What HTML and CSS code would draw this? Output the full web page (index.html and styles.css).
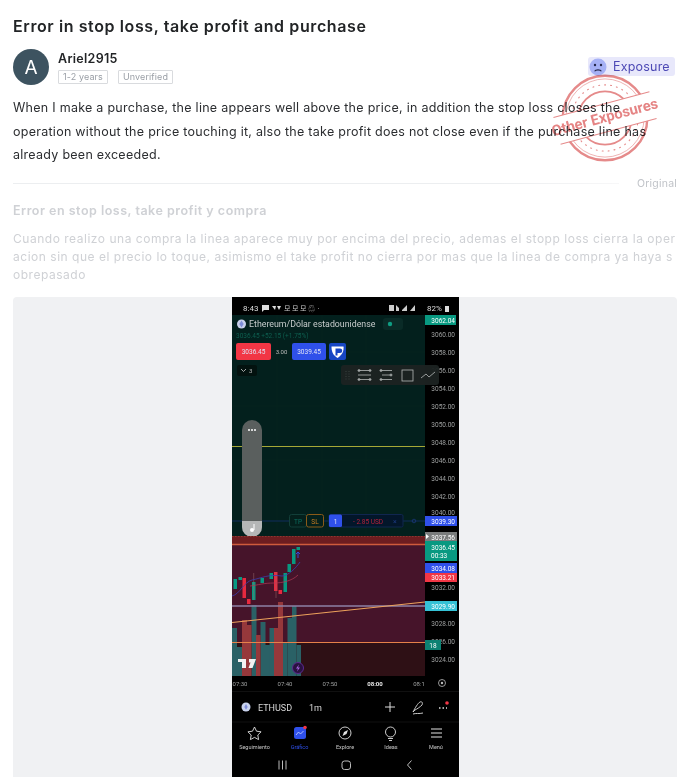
FILE: index.html
```html
<!DOCTYPE html>
<html lang="en">
<head>
<meta charset="utf-8">
<title>Error in stop loss, take profit and purchase</title>
<link rel="stylesheet" href="styles.css">
</head>
<body>
<main class="post">
  <h1 class="title">Error in stop loss, take profit and purchase</h1>
  <div class="author">
    <div class="avatar">A</div>
    <div class="author-info">
      <div class="name">Ariel2915</div>
      <div class="tags"><span class="tag tag-wide">1-2 years</span><span class="tag">Unverified</span></div>
    </div>
    <div class="badge">
      <svg class="badge-face" viewBox="0 0 18 18"><circle cx="9" cy="9" r="8.5" fill="#a6b1f6"/><circle cx="6" cy="7" r="1.2" fill="#24264a"/><circle cx="12" cy="7" r="1.2" fill="#24264a"/><path d="M5.6 13.2c1-1.8 5.8-1.8 6.8 0" fill="none" stroke="#24264a" stroke-width="1.1"/></svg>
      <span>Exposure</span>
    </div>
  </div>
  <div class="body-wrap">
    <p class="body">When I make a purchase, the line appears well above the price, in addition the stop loss closes the operation without the price touching it, also the take profit does not close even if the purchase line has already been exceeded.</p>
    <svg class="stamp" viewBox="0 0 100 100">
      <g fill="none" stroke="#e58a8a">
        <circle cx="50" cy="50" r="46" stroke-width="2.6"/>
        <circle cx="50" cy="50" r="42.5" stroke-width=".7"/>
        <circle cx="50" cy="50" r="36" stroke-width="1.2" stroke-dasharray="1 5.5" stroke-linecap="round"/>
        <circle cx="50" cy="50" r="29" stroke-width="2"/>
      </g>
      <g transform="rotate(-15 50 50)">
        <rect x="-4" y="35" width="108" height="30" fill="#fff"/>
        <path d="M-4 35H104M-4 65H104" stroke="#e58a8a" stroke-width="1"/>
        <text class="stamp-text" x="50" y="54.500" text-anchor="middle">Other Exposures</text>
      </g>
    </svg>
  </div>
  <div class="rule-row"><div class="rule"></div><span class="original">Original</span></div>
  <h2 class="title-es">Error en stop loss, take profit y compra</h2>
  <p class="body-es">Cuando realizo una compra la linea aparece muy por encima del precio, ademas el stopp loss cierra la operacion sin que el precio lo toque, asimismo el take profit no cierra por mas que la linea de compra ya haya sobrepasado</p>
  <div class="shot">
    <svg class="phone" viewBox="232 297 227 480">
      <rect x="232" y="297" width="227" height="480" fill="#000"/>
      <rect x="232" y="315" width="193" height="221" fill="#03201d"/>
      <path d="M232 352H425M232 406H425M232 460H425M277 315V536M322 315V536M366 315V536" stroke="#07271f" stroke-width=".6"/>

      <text class="st" x="243" y="311">8:43</text>
      <path d="M262 305h7v5h-5l-2 2zM272 306h4l-1 4zM277 306h4l-2 4z" fill="#ddd"/>
      <text class="st-i" x="284" y="311">모 모 모 ♲ ·</text>
      <path d="M389 305h5v6h-5zM396 305l3 3v3h-3zM402 310l5-5v6h-5zM410 311l5-6v6h-5z" fill="#ccc"/>
      <text class="st" x="427" y="311">82%</text>
      <rect x="445" y="306" width="4" height="6" fill="#ddd"/>

      <circle cx="241.500" cy="324" r="4.500" fill="#c9d0ec"/>
      <path d="M241.500 320.500l-2.200 3.600 2.200 3.400 2.200-3.400z" fill="#7f8dd8"/>
      <text class="chart-title" x="249" y="327">Ethereum/Dólar estadounidense</text>
      <rect x="383" y="318" width="20" height="12" rx="3" fill="#0a2b27"/>
      <circle cx="390" cy="324" r="2.200" fill="#0f9d83"/>
      <text class="quote" x="236" y="338">3036.45 +52.15 (+1.75%)</text>

      <rect x="236" y="343" width="35" height="17" rx="2" fill="#f23645"/>
      <text class="btn" x="253.500" y="354" text-anchor="middle">3036.45</text>
      <text class="qty" x="281.500" y="353.500" text-anchor="middle">3.00</text>
      <rect x="292" y="343" width="34" height="17" rx="2" fill="#2f50ea"/>
      <text class="btn" x="309" y="354" text-anchor="middle">3039.45</text>
      <rect x="329" y="343" width="17" height="17" rx="2" fill="#1746c4"/>
      <path d="M331.500 346.500h12c.5 4-.8 8-6 11.500-5-3-6-7-6-11.500z" fill="#fff"/>
      <path d="M335.500 348.500h4.500a2 2 0 0 1 0 4.500h-2.500v2.500h-2z" fill="#1746c4"/>

      <rect x="237" y="365" width="20" height="11" rx="2" fill="#03120f"/>
      <path d="M241 369l2.500 2.500 2.500-2.500" fill="none" stroke="#ccc" stroke-width=".8"/>
      <text class="qty" x="249" y="373">3</text>

      <text class="axis-under" x="455" y="372.500" text-anchor="end">3056.00</text>
      <rect x="341" y="365" width="98" height="20" rx="3" fill="#1c2221" fill-opacity=".96"/>
      <path d="M346 371v10M349 371v10" stroke="#3b4241" stroke-dasharray="1 1.500"/>
      <g fill="none" stroke="#b4b8b8" stroke-width=".8">
        <path d="M358 370.500H371M358 375H371M358 379.500H371"/><circle cx="359" cy="370.500" r="1"/><circle cx="370" cy="370.500" r="1"/><circle cx="359" cy="379.500" r="1"/><circle cx="370" cy="379.500" r="1"/>
        <path d="M380 370.500H392M382 375H392M380 379.500H392"/><circle cx="381" cy="370.500" r="1"/><circle cx="391" cy="375" r="1"/><circle cx="381" cy="379.500" r="1"/>
        <rect x="402" y="370" width="11" height="11"/>
        <path d="M421 378l5-4 3 3 6-5"/>
      </g>

      <path d="M232 446.500H425" stroke="#a6a836" stroke-width="1.200"/>
      <path d="M232 521H425" stroke="#15306d" stroke-width=".8"/>
      <rect x="242" y="420" width="20" height="117" rx="10" fill="#5a5f5e"/>
      <path d="M242 521h20v6a10 10 0 0 1-20 0z" fill="#b5b7b7"/>
      <path d="M248 430h2M251 430h2M254 430h2" stroke="#fff" stroke-width="1.500"/>
      <path d="M254 524v6" stroke="#fff"/>
      <circle cx="252" cy="530" r="2" fill="#fff"/>

      <rect x="289.500" y="514.500" width="17" height="12.500" rx="2" fill="#04201c" stroke="#123f39"/>
      <text class="pos-tp" x="298" y="523.500" text-anchor="middle">TP</text>
      <rect x="306.500" y="514.500" width="17" height="12.500" rx="2" fill="#04201c" stroke="#8a5a18"/>
      <text class="pos-sl" x="315" y="523.500" text-anchor="middle">SL</text>
      <rect x="329" y="514.500" width="74" height="12.500" rx="1.500" fill="#03162a" stroke="#10264f"/>
      <rect x="329" y="514.500" width="13" height="12.500" rx="1.500" fill="#2f50ea"/>
      <text class="btn" x="335.500" y="523.500" text-anchor="middle">1</text>
      <text class="pos-usd" x="353" y="523.500">- 2.85 USD</text>
      <text class="pos-x" x="393" y="523.500">×</text>
      <circle cx="414" cy="521" r="1.800" fill="none" stroke="#1c3a84" stroke-width=".7"/>

      <rect x="232" y="536" width="193" height="9" fill="#6d1d20"/>
      <rect x="232" y="545" width="193" height="97" fill="#46142a"/>
      <rect x="232" y="642" width="193" height="34" fill="#2e1015"/>
      <path d="M232 536.500H425" stroke="#a24a3c" stroke-width=".6" stroke-dasharray="1.500 1.500"/>
      <path d="M232 544.500H425" stroke="#cf5b3c" stroke-width="1.300"/>

      <g fill="#2a6166">
        <rect x="232" y="628" width="5" height="48"/><rect x="237" y="647" width="5" height="29"/>
        <rect x="251.500" y="605" width="5" height="71"/><rect x="260.500" y="622" width="5" height="54"/>
        <rect x="265" y="645" width="5" height="31"/><rect x="269.500" y="628" width="4.500" height="48"/>
        <rect x="283" y="643" width="4.500" height="33"/><rect x="287.500" y="618" width="4.500" height="58"/>
        <rect x="292" y="606" width="4.500" height="70"/><rect x="296.500" y="645" width="4.500" height="31"/>
      </g>
      <g fill="#96383b">
        <rect x="242" y="620" width="5" height="56"/><rect x="247" y="625" width="4.500" height="51"/>
        <rect x="256" y="635" width="4.500" height="41"/><rect x="274" y="628" width="4.500" height="48"/>
        <rect x="278" y="602" width="5" height="74"/>
      </g>

      <g fill="#089981">
        <rect x="233.500" y="579" width="3.500" height="10"/><rect x="238.500" y="577" width="3.500" height="3"/>
        <rect x="252" y="582" width="3.500" height="18"/><rect x="260.500" y="578" width="3.500" height="5"/>
        <rect x="269.500" y="573" width="3.500" height="6"/><rect x="283.500" y="573" width="3.500" height="19"/>
        <rect x="287.500" y="564" width="3.500" height="8"/><rect x="292" y="549" width="3.500" height="15"/>
        <rect x="296.500" y="547" width="3.500" height="3"/>
      </g>
      <g fill="#e8293f">
        <rect x="242.500" y="578" width="3.500" height="20"/><rect x="247" y="599" width="3.500" height="5"/>
        <rect x="274" y="572" width="3.500" height="19"/><rect x="278.500" y="590" width="3.500" height="4"/>
      </g>
      <path d="M253.700 573V600M276 572V598" stroke="#9a6a6a" stroke-width=".5"/>
      <path d="M232 596c8-2 12-14 20-16 10-2 16-6 30-4 6 0 14-8 18-14" fill="none" stroke="#3a3fae" stroke-width=".8"/>
      <path d="M250 586c8-1 14-3 24-3 8 0 18-2 24-8" fill="none" stroke="#b13a56" stroke-width=".7"/>
      <path d="M298 558v-6m-2 2l2-2 2 2" fill="none" stroke="#2f50ea" stroke-width=".9"/>

      <path d="M232 606H425" stroke="#8e80a6" stroke-width="1.500"/>
      <path d="M232 622.500L425 602" stroke="#eda25c" stroke-width="1.200"/>
      <path d="M232 642.500H425" stroke="#e68149" stroke-width="1.100"/>

      <path d="M238 659h8v9h-4v-6h-4zM249 659h7l-3.500 9h-4l2-5.500h-1.500z" fill="#f2f2f2"/>
      <circle cx="298" cy="668" r="5.500" fill="#2a1140" stroke="#5b2a8f"/>
      <path d="M299 664.500l-3 4h2l-1 3 3-4h-2z" fill="#a563e0"/>

      <g class="axis">
        <text x="455" y="336.500" text-anchor="end">3060.00</text>
        <text x="455" y="354.500" text-anchor="end">3058.00</text>
        <text x="455" y="390.500" text-anchor="end">3054.00</text>
        <text x="455" y="408.500" text-anchor="end">3052.00</text>
        <text x="455" y="426.500" text-anchor="end">3050.00</text>
        <text x="455" y="444.500" text-anchor="end">3048.00</text>
        <text x="455" y="462.500" text-anchor="end">3046.00</text>
        <text x="455" y="480.500" text-anchor="end">3044.00</text>
        <text x="455" y="498.500" text-anchor="end">3042.00</text>
        <text x="455" y="514.500" text-anchor="end">3040.00</text>
        <text x="455" y="589.500" text-anchor="end">3032.00</text>
        <text x="455" y="625.500" text-anchor="end">3028.00</text>
        <text x="455" y="643.500" text-anchor="end">3026.00</text>
        <text x="455" y="661.500" text-anchor="end">3024.00</text>
      </g>
      <rect x="425" y="315" width="31" height="10" fill="#089981"/>
      <text class="tagv" x="455" y="322.500" text-anchor="end">3062.04</text>
      <rect x="425" y="516" width="32" height="10" fill="#2f50ea"/>
      <text class="tagv" x="455" y="523.500" text-anchor="end">3039.30</text>
      <rect x="425" y="532" width="32" height="9" fill="#7a7c7c"/>
      <path d="M426 534l3 2.500-3 2.500z" fill="#fff"/>
      <text class="tagv" x="455" y="539.500" text-anchor="end">3037.56</text>
      <rect x="425" y="541" width="32" height="20" fill="#089981"/>
      <text class="tagv" x="455" y="549.500" text-anchor="end">3036.45</text>
      <text class="tagv" x="431" y="558">00:33</text>
      <rect x="425" y="563" width="32" height="10" fill="#2f50ea"/>
      <text class="tagv" x="455" y="570.500" text-anchor="end">3034.08</text>
      <rect x="425" y="573" width="32" height="9" fill="#f23645"/>
      <text class="tagv" x="455" y="580" text-anchor="end">3033.21</text>
      <rect x="425" y="601" width="32" height="10" fill="#35c2d6"/>
      <text class="tagv" x="455" y="608.500" text-anchor="end">3029.90</text>
      <rect x="425" y="640" width="16" height="10" fill="#0d8273"/>
      <text class="tagv" x="433" y="648" text-anchor="middle">18</text>

      <g class="time">
        <text x="240" y="686" text-anchor="middle">07:30</text>
        <text x="285" y="686" text-anchor="middle">07:40</text>
        <text x="330" y="686" text-anchor="middle">07:50</text>
        <text class="time-b" x="375" y="686" text-anchor="middle">08:00</text>
        <text x="419" y="686" text-anchor="middle">08:1</text>
      </g>
      <circle cx="442" cy="683" r="3.500" fill="none" stroke="#bbb" stroke-width=".8"/>
      <circle cx="442" cy="683" r="1.200" fill="#bbb"/>
      <path d="M232 691.500H459M232 722H459" stroke="#1b1b1b" stroke-width=".6"/>

      <circle cx="246" cy="707" r="4.500" fill="#c9d3ee"/>
      <path d="M246 704l-1.700 3 1.700 2.800 1.700-2.800z" fill="#7f8dd8"/>
      <text class="sym" x="258" y="710.500">ETHUSD</text>
      <text class="sym" x="309" y="710.500">1m</text>
      <path d="M385 707h10M390 702v10" stroke="#ddd" stroke-width="1"/>
      <path d="M413 712c2-4 5-9 7-10 2-1 3 1 2 3-2 2-5 4-7 5l-2 2zM413 714c3-1 6 0 10-1" fill="none" stroke="#ddd" stroke-width=".9"/>
      <path d="M439 708h1.500M442.500 708h1.500M446 708h1" stroke="#ddd" stroke-width="1.300"/>
      <circle cx="447" cy="703" r="1.800" fill="#f23645"/>

      <path d="M254.500 727l2 4.200 4.600.6-3.300 3.200.8 4.600-4.100-2.200-4.100 2.200.8-4.600-3.300-3.200 4.600-.6z" fill="none" stroke="#e2e2e2" stroke-width=".9"/>
      <rect x="294" y="727" width="12" height="12" rx="2.500" fill="#2f50ea"/>
      <path d="M296 735l2.500-3 2 2 3-3" fill="none" stroke="#cdd6ff" stroke-width=".8"/>
      <circle cx="305" cy="727.500" r="1.800" fill="#f23645"/>
      <circle cx="345" cy="733" r="6" fill="none" stroke="#e2e2e2" stroke-width=".9"/>
      <path d="M348 730l-4 2-1.500 4 4-2z" fill="#e2e2e2"/>
      <circle cx="390.500" cy="732" r="5" fill="none" stroke="#e2e2e2" stroke-width=".9"/>
      <path d="M388 738.500h5M389 740.500h3" stroke="#e2e2e2" stroke-width=".9"/>
      <path d="M431 729h11M431 733h11M431 737h11" stroke="#e2e2e2" stroke-width="1"/>
      <text class="tab" x="254.500" y="749" text-anchor="middle">Seguimiento</text>
      <text class="tab tab-on" x="299.500" y="749" text-anchor="middle">Gráfico</text>
      <text class="tab" x="345" y="749" text-anchor="middle">Explore</text>
      <text class="tab" x="391" y="749" text-anchor="middle">Ideas</text>
      <text class="tab" x="436" y="749" text-anchor="middle">Menú</text>

      <path d="M279 760.500v9M282.500 760.500v9M286 760.500v9" stroke="#bbb" stroke-width="1"/>
      <rect x="342" y="761" width="8.500" height="8.500" rx="2.500" fill="none" stroke="#bbb"/>
      <path d="M411.500 760.500l-4 4.500 4 4.500" fill="none" stroke="#bbb"/>
    </svg>
  </div>
</main>
</body>
</html>
```
FILE: styles.css
```css
* { box-sizing: border-box; }
html, body { margin: 0; padding: 0; background: #fff; }
body { font-family: Inter, "Liberation Sans", sans-serif; height: 777px; overflow: hidden; }
.post { padding: 17px 0 0 13px; width: 677px; }
.title { margin: 0; font-size: 16px; line-height: 18px; font-weight: 600; letter-spacing: .6px; color: #222426; }
.author { display: flex; align-items: center; gap: 9px; margin-top: 14px; position: relative; height: 36px; }
.avatar { width: 36px; height: 36px; border-radius: 50%; background: #3d5360; color: #fff; font-size: 19px; display: flex; align-items: center; justify-content: center; }
.author-info { display: flex; flex-direction: column; gap: 4px; }
.name { font-size: 12.500px; line-height: 15px; font-weight: 600; letter-spacing: .3px; color: #222426; }
.tags { display: flex; gap: 10px; }
.tag { font-size: 9px; line-height: 12px; padding: 0 4px; border: 1px solid #d9dbde; border-radius: 1px; color: #9a9fa6; letter-spacing: .1px; }
.tag-wide { min-width: 50px; text-align: center; }
.badge { position: absolute; left: 575px; top: 8px; width: 87px; height: 19px; background: #e8e8fb; border-radius: 3px; display: flex; align-items: center; gap: 6px; color: #4d49b5; font-size: 12.500px; letter-spacing: .2px; }
.badge-face { width: 18px; height: 18px; margin-left: 1px; }
.body-wrap { position: relative; margin-top: 11px; }
.body { margin: 0; font-size: 12.500px; line-height: 23.500px; letter-spacing: .27px; color: #2b2d30; }
.stamp { position: absolute; left: 546px; top: -24px; width: 92px; height: 92px; mix-blend-mode: multiply; overflow: visible; }
.stamp-text { font-size: 16px; font-weight: 700; fill: #e58484; font-family: Roboto, sans-serif; }
.rule-row { display: flex; align-items: center; margin-top: 10px; height: 14px; }
.rule { width: 607px; height: 1px; background: linear-gradient(90deg, #eceef0 80%, #f7f7f8); }
.original { margin-left: 18px; font-size: 10.500px; letter-spacing: .2px; color: #c0c3c8; white-space: nowrap; }
.title-es { margin: 12px 0 0; font-size: 12.500px; line-height: 16px; font-weight: 600; letter-spacing: .5px; color: #cfd1d5; }
.body-es { margin: 11px 0 0; font-size: 12px; line-height: 18px; letter-spacing: .52px; color: #cfd1d5; word-break: break-all; }
.shot { margin-top: 13px; height: 480px; width: 664px; background: #f0f1f3; border-radius: 4px 4px 0 0; display: flex; justify-content: center; }
.phone { width: 227px; height: 480px; display: block; font-family: Roboto, sans-serif; filter: blur(.35px); }
.st { font-size: 8px; fill: #ddd; }
.st-i { font-size: 7px; fill: #ccc; font-family: "Noto Sans CJK KR", sans-serif; }
.chart-title { font-size: 8.800px; fill: #c8cccc; }
.quote { font-size: 6.500px; fill: #0e5f50; }
.btn { font-size: 6.500px; fill: #dfe3f5; }
.qty { font-size: 6px; fill: #bbb; }
.pos-tp { font-size: 6.500px; fill: #0b6f60; }
.pos-sl { font-size: 6.500px; fill: #c87c22; }
.pos-usd { font-size: 6.500px; fill: #b5213a; }
.pos-x { font-size: 7px; fill: #1c3a84; }
.axis text, .axis-under { font-size: 6.500px; fill: #9ea0a0; }
.tagv { font-size: 6.500px; fill: #fff; }
.time text { font-size: 6px; fill: #9ea0a0; }
.time .time-b { fill: #e8e8e8; font-weight: 700; }
.sym { font-size: 9px; fill: #d8d8d8; }
.tab { font-size: 5.500px; fill: #c8c8c8; }
.tab-on { fill: #2f50ea; }
```
